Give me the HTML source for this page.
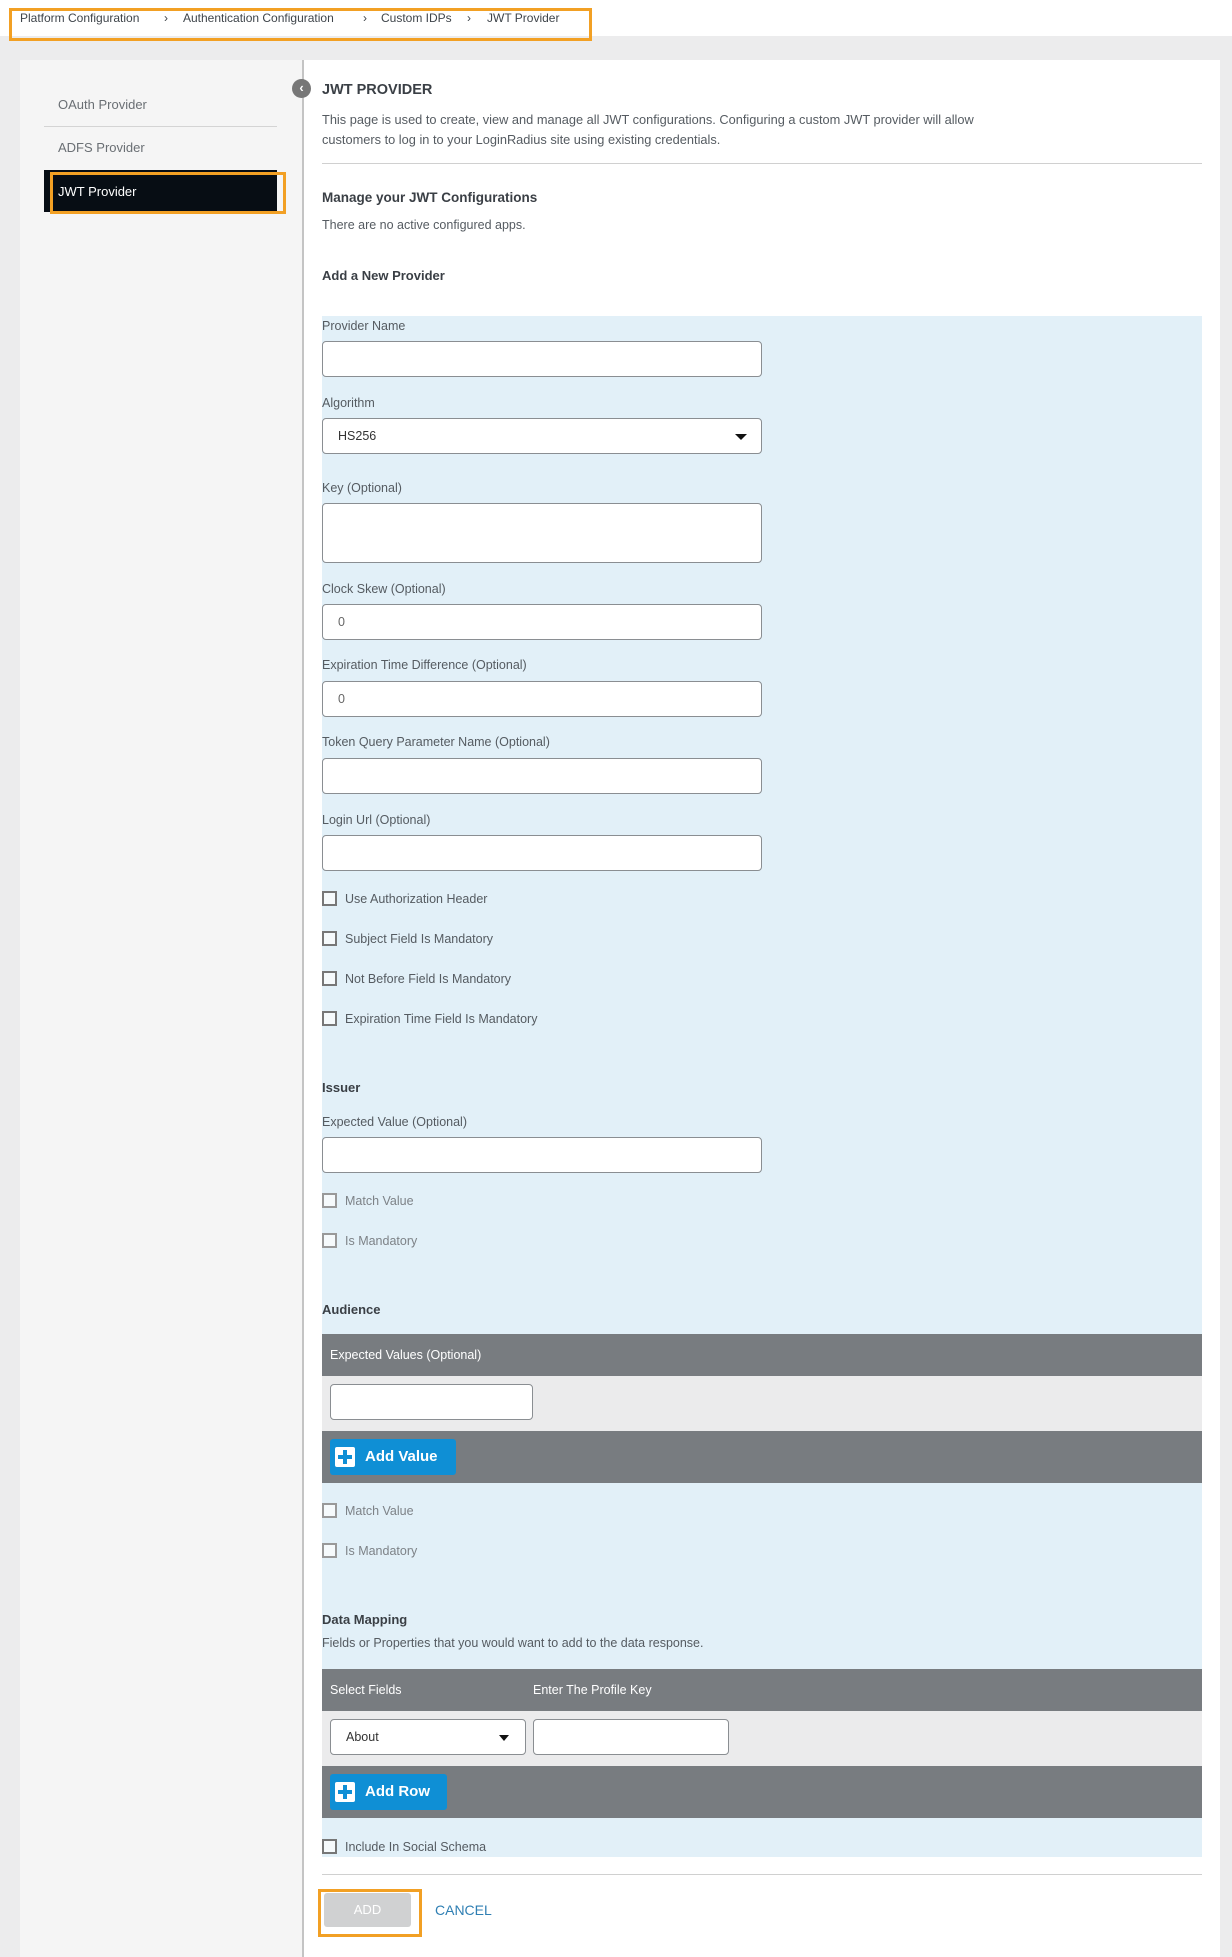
<!DOCTYPE html>
<html><head><meta charset="utf-8"><style>
*{box-sizing:border-box;margin:0;padding:0}
body{width:1232px;height:1957px;background:#ececed;font-family:"Liberation Sans",sans-serif;color:#4a4f55;position:relative;overflow:hidden}
.a{position:absolute;white-space:nowrap}
.top{position:absolute;left:0;top:0;width:1232px;height:36px;background:#fff}
.bc{font-size:12px;color:#3e444a;top:11px}
.lbl{font-size:12.5px;color:#555b61}
.inp{position:absolute;background:#fff;border:1px solid #8a8e92;border-radius:4px}
.cb{position:absolute;width:15px;height:15px;border:2px solid #777;background:#f6fafc}
.h{font-size:13.5px;font-weight:bold;color:#3a3f45}
.dark{position:absolute;left:322px;width:880px;background:#787c80}
.lg{position:absolute;left:322px;width:880px;background:#ebebec}
.btn{position:absolute;background:#0f8fd5;border-radius:3px;color:#fff;font-weight:bold;font-size:15px}
.plus{position:absolute;left:5px;top:8px;width:20px;height:20px;background:#fff;border-radius:2px}
.plus:before{content:"";position:absolute;left:8px;top:3px;width:4px;height:14px;background:#0f8fd5}
.plus:after{content:"";position:absolute;left:3px;top:8px;width:14px;height:4px;background:#0f8fd5}
</style></head><body>
<div class="top"></div>
<div class="a" style="left:9px;top:8px;width:583px;height:33px;border:3px solid #f2a024"></div>
<div class="a bc" style="left:20px">Platform Configuration</div>
<div class="a bc" style="left:164px">&rsaquo;</div>
<div class="a bc" style="left:183px">Authentication Configuration</div>
<div class="a bc" style="left:363px">&rsaquo;</div>
<div class="a bc" style="left:381px">Custom IDPs</div>
<div class="a bc" style="left:467px">&rsaquo;</div>
<div class="a bc" style="left:487px">JWT Provider</div>

<div class="a" style="left:20px;top:60px;width:282px;height:1897px;background:#f5f5f5"></div>
<div class="a" style="left:302px;top:60px;width:918px;height:1897px;background:#fff;border-left:2px solid #c4c4c4"></div>
<div class="a" style="left:58px;top:97px;font-size:13px;color:#6a6f74">OAuth Provider</div>
<div class="a" style="left:44px;top:126px;width:233px;height:1px;background:#d4d4d4"></div>
<div class="a" style="left:58px;top:140px;font-size:13px;color:#6a6f74">ADFS Provider</div>
<div class="a" style="left:44px;top:170px;width:233px;height:42px;background:#070d14"></div>
<div class="a" style="left:50px;top:172px;width:236px;height:42px;border:3px solid #f2a024"></div>
<div class="a" style="left:58px;top:184px;font-size:13px;color:#fff">JWT Provider</div>
<div class="a" style="left:292px;top:79px;width:19px;height:19px;border-radius:50%;background:#777;color:#fff;font-size:13px;font-weight:bold;text-align:center;line-height:18px">&lsaquo;</div>

<div class="a h" style="left:322px;top:82px;font-size:14.5px">JWT PROVIDER</div>
<div class="a" style="left:322px;top:110px;font-size:12.8px;line-height:20px;color:#555b61">This page is used to create, view and manage all JWT configurations. Configuring a custom JWT provider will allow<br>customers to log in to your LoginRadius site using existing credentials.</div>
<div class="a" style="left:322px;top:163px;width:880px;height:1px;background:#d0d0d0"></div>
<div class="a h" style="left:322px;top:190px">Manage your JWT Configurations</div>
<div class="a lbl" style="left:322px;top:218px">There are no active configured apps.</div>
<div class="a h" style="left:322px;top:268px;font-size:13px">Add a New Provider</div>

<div class="a" style="left:322px;top:316px;width:880px;height:1541px;background:#e2f0f8"></div>

<div class="a lbl" style="left:322px;top:319px">Provider Name</div>
<div class="inp" style="left:322px;top:341px;width:440px;height:36px"></div>
<div class="a lbl" style="left:322px;top:396px">Algorithm</div>
<div class="inp" style="left:322px;top:418px;width:440px;height:36px"></div>
<div class="a" style="left:338px;top:429px;font-size:12.5px;color:#333">HS256</div>
<div class="a" style="left:735px;top:434px;width:0;height:0;border-left:6px solid transparent;border-right:6px solid transparent;border-top:6px solid #111"></div>
<div class="a lbl" style="left:322px;top:481px">Key (Optional)</div>
<div class="inp" style="left:322px;top:503px;width:440px;height:60px"></div>
<div class="a lbl" style="left:322px;top:582px">Clock Skew (Optional)</div>
<div class="inp" style="left:322px;top:604px;width:440px;height:36px"></div>
<div class="a" style="left:338px;top:615px;font-size:12.5px;color:#666">0</div>
<div class="a lbl" style="left:322px;top:658px">Expiration Time Difference (Optional)</div>
<div class="inp" style="left:322px;top:681px;width:440px;height:36px"></div>
<div class="a" style="left:338px;top:692px;font-size:12.5px;color:#666">0</div>
<div class="a lbl" style="left:322px;top:735px">Token Query Parameter Name (Optional)</div>
<div class="inp" style="left:322px;top:758px;width:440px;height:36px"></div>
<div class="a lbl" style="left:322px;top:813px">Login Url (Optional)</div>
<div class="inp" style="left:322px;top:835px;width:440px;height:36px"></div>

<div class="cb" style="left:322px;top:891px"></div><div class="a lbl" style="left:345px;top:892px">Use Authorization Header</div>
<div class="cb" style="left:322px;top:931px"></div><div class="a lbl" style="left:345px;top:932px">Subject Field Is Mandatory</div>
<div class="cb" style="left:322px;top:971px"></div><div class="a lbl" style="left:345px;top:972px">Not Before Field Is Mandatory</div>
<div class="cb" style="left:322px;top:1011px"></div><div class="a lbl" style="left:345px;top:1012px">Expiration Time Field Is Mandatory</div>

<div class="a h" style="left:322px;top:1080px;font-size:13px">Issuer</div>
<div class="a lbl" style="left:322px;top:1115px">Expected Value (Optional)</div>
<div class="inp" style="left:322px;top:1137px;width:440px;height:36px"></div>
<div class="cb" style="left:322px;top:1193px;border-color:#999"></div><div class="a lbl" style="left:345px;top:1194px;color:#7d8287">Match Value</div>
<div class="cb" style="left:322px;top:1233px;border-color:#999"></div><div class="a lbl" style="left:345px;top:1234px;color:#7d8287">Is Mandatory</div>

<div class="a h" style="left:322px;top:1302px;font-size:13px">Audience</div>
<div class="dark" style="top:1334px;height:42px"></div>
<div class="a" style="left:330px;top:1348px;font-size:12.5px;color:#fff">Expected Values (Optional)</div>
<div class="lg" style="top:1376px;height:55px"></div>
<div class="inp" style="left:330px;top:1384px;width:203px;height:36px"></div>
<div class="dark" style="top:1431px;height:52px"></div>
<div class="btn" style="left:330px;top:1439px;width:126px;height:36px"><div class="plus"></div><span class="a" style="left:35px;top:9px">Add Value</span></div>
<div class="cb" style="left:322px;top:1503px;border-color:#999"></div><div class="a lbl" style="left:345px;top:1504px;color:#7d8287">Match Value</div>
<div class="cb" style="left:322px;top:1543px;border-color:#999"></div><div class="a lbl" style="left:345px;top:1544px;color:#7d8287">Is Mandatory</div>

<div class="a h" style="left:322px;top:1612px;font-size:13px">Data Mapping</div>
<div class="a lbl" style="left:322px;top:1636px">Fields or Properties that you would want to add to the data response.</div>
<div class="dark" style="top:1669px;height:42px"></div>
<div class="a" style="left:330px;top:1683px;font-size:12.5px;color:#fff">Select Fields</div>
<div class="a" style="left:533px;top:1683px;font-size:12.5px;color:#fff">Enter The Profile Key</div>
<div class="lg" style="top:1711px;height:55px"></div>
<div class="inp" style="left:330px;top:1719px;width:196px;height:36px"></div>
<div class="a" style="left:346px;top:1730px;font-size:12.5px;color:#333">About</div>
<div class="a" style="left:499px;top:1735px;width:0;height:0;border-left:5px solid transparent;border-right:5px solid transparent;border-top:6px solid #111"></div>
<div class="inp" style="left:533px;top:1719px;width:196px;height:36px"></div>
<div class="dark" style="top:1766px;height:52px"></div>
<div class="btn" style="left:330px;top:1774px;width:117px;height:36px"><div class="plus"></div><span class="a" style="left:35px;top:9px">Add Row</span></div>
<div class="cb" style="left:322px;top:1839px"></div><div class="a lbl" style="left:345px;top:1840px">Include In Social Schema</div>

<div class="a" style="left:322px;top:1874px;width:880px;height:1px;background:#d0d0d0"></div>
<div class="a" style="left:318px;top:1889px;width:104px;height:48px;border:3px solid #f2a024"></div>
<div class="a" style="left:324px;top:1893px;width:87px;height:34px;background:#d0d1d2;border-radius:3px;color:#fff;font-size:13px;text-align:center;line-height:34px">ADD</div>
<div class="a" style="left:435px;top:1902px;font-size:14px;color:#2f7fb3">CANCEL</div>
</body></html>
